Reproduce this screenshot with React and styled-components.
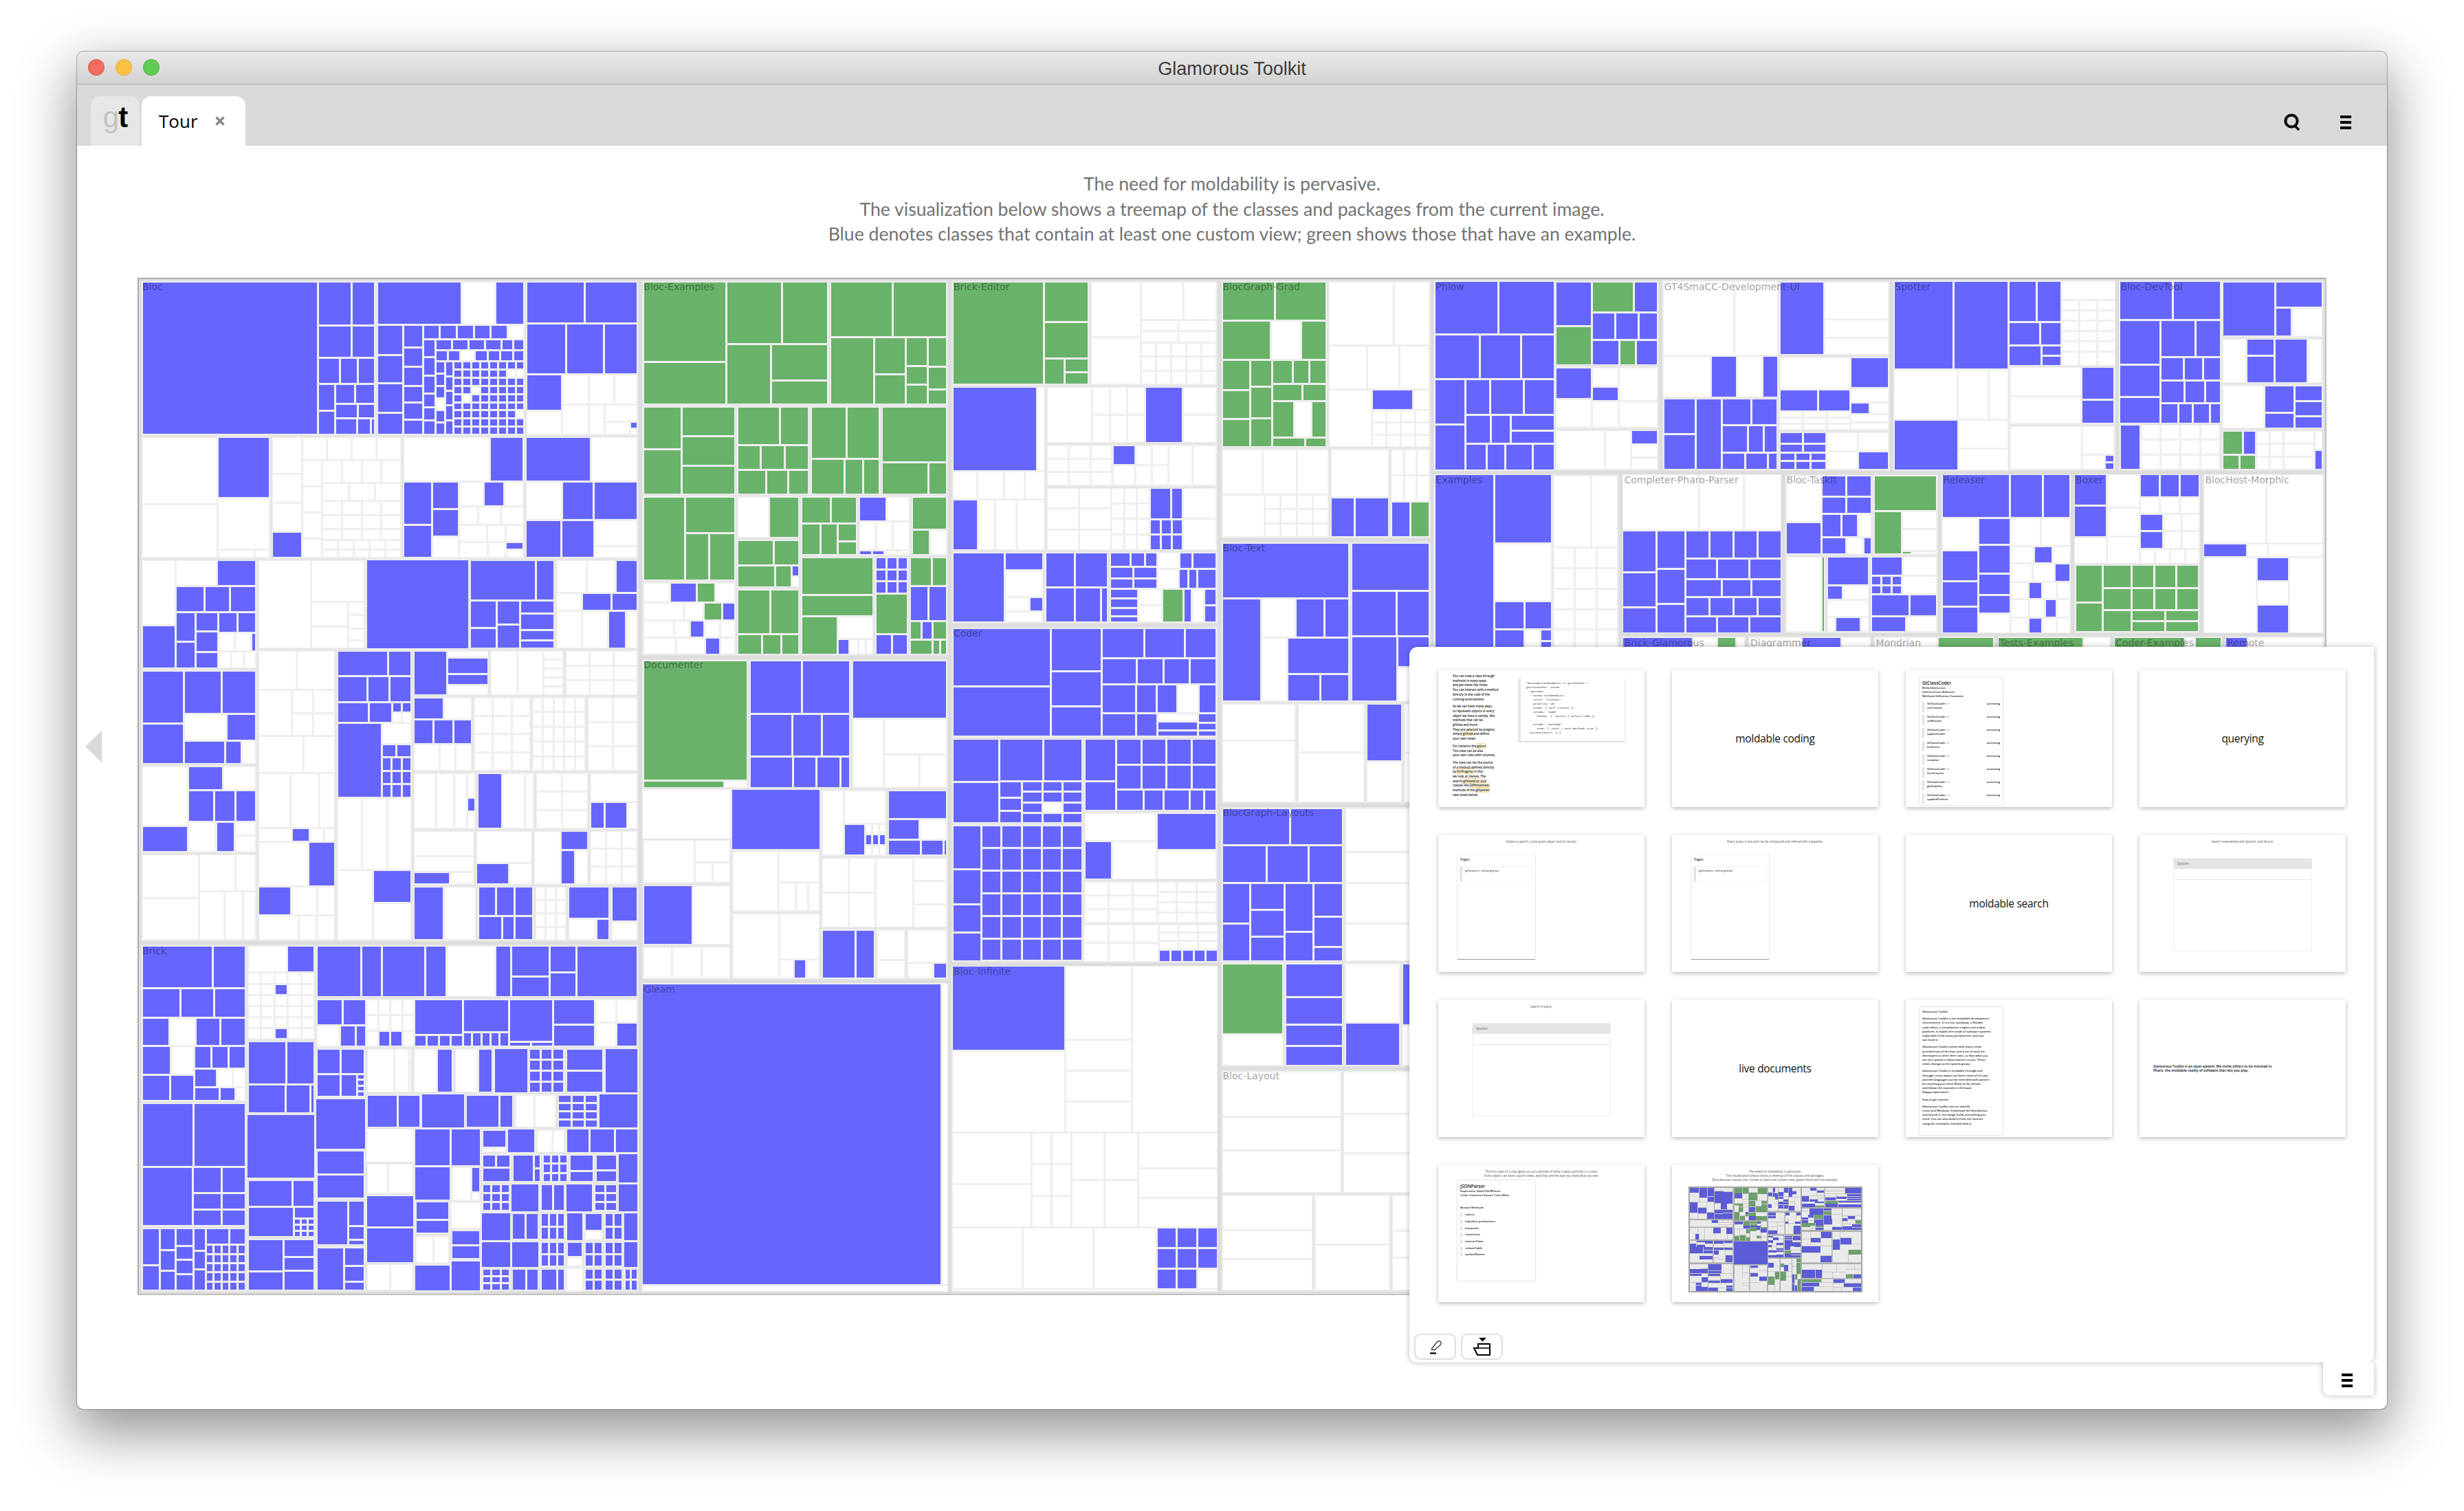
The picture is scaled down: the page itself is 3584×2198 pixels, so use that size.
import React from "react";
import styled, { createGlobalStyle } from "styled-components";

/* ---------- treemap data helpers ---------- */
// grid('bb/bw') gives equal rows of equal leaves, H/V split with weights
const grid = (s) => {
  const rows = s.split("/");
  if (rows.length === 1 && rows[0].length === 1) return { c: s };
  const mk = (r) => ({ d: "row", k: [...r].map((c) => ({ w: 1, n: { c } })) });
  if (rows.length === 1) return mk(rows[0]);
  return { d: "column", k: rows.map((r) => ({ w: 1, n: r.length === 1 ? { c: r } : mk(r) })) };
};
const kids = (items) =>
  items.flatMap((it) =>
    typeof it === "string"
      ? it.trim().split(/\s+/).map((t) => ({ w: +t.slice(1), n: { c: t[0] } }))
      : [{ w: it[0], n: typeof it[1] === "string" ? grid(it[1]) : it[1] }]
  );
const H = (...i) => ({ d: "row", k: kids(i) });
const V = (...i) => ({ d: "column", k: kids(i) });
const F = (node, label) => ({ ...node, f: true, label });
const W = (r, c) => grid(Array(r).fill("w".repeat(c)).join("/"));

const blocTree = F(
  V(
    [227, H(
      [705, F(H("b522", [172, V(
        [165, H("b95 b64")],
        [120, H("b95 b64")],
        [100, H("b60 b46 b45")],
        [190, H([50, V("b95 b85")], [112, V([68, H("b53 b53")], [50, H("b60 b46")], [58, H("b60 b34 b7")])])]
      )]))],
      [445, F(V(
        [165, H("b243 w92 b80")],
        [422, H(
          [75, V("b110 b100 b105 b78")],
          [58, V("b78 b65 b65 b55 b55 b50")],
          [295, V(
            [55, "bbbbbw"],
            [360, H(
              [37, V("b58 b60 b58 b43 b42 b45")],
              [258, V(
                [40, H("b38 b38 b38 b38 b24 b25")],
                [40, H("b26 b28 w32 b28 b28 b28 b24")],
                [265, H(
                  [25, V("b35 b35 b35 w35 b35 b35")],
                  [22, V("b45 b45 b45 b45 b45")],
                  [185, "bbbbbbbb/bbbbbbww/bbbbbbbb/bbwbbbbb/bwbbbbbb/bbbbbbbb/bbbbbbbw/bbbbbbbb/bbbbbbbb"]
                )]
              )]
            )]
          )]
        )]
      ))],
      [335, F(V(
        [160, H("b165 b150")],
        [195, H("b110 b105 b93")],
        [230, H(
          [102, V("b130 w85")],
          [218, V(
            [112, H("w75 w70 w65")],
            [115, H("w75", [42, "w"], [98, V("w60", [50, H("w65", [20, V("b25 w22")])])])]
          )]
        )]
      ))]
    )],
    [180, H(
      [385, F(H(
        [225, V("w250 w200")],
        [155, V("b222 w185", [32, H("w105 w40")])]
      ))],
      [388, F(H(
        [88, V("w130 w100 w100 b92")],
        [290, V(
          [90, "wwww"],
          [375, H(
            [60, V("w85 w85 w85 w62")],
            [232, V([75, "wwww"], [60, "www"], [48, "wwww"], [44, "wwww"], [38, "wwww"], [32, "wwwww"], [28, "wwwww"])]
          )]
        )]
      ))],
      [362, F(V(
        [165, H("w255 b97")],
        [285, H(
          [85, V("b150 b115")],
          [78, V("b92 b92 w72")],
          [190, V(
            [85, H("w72 b58 w55")],
            [65, H("w50 w62 w62")],
            [60, H("w55 w35 w35")],
            [55, H("w58 w35", [40, V("b22 w28")])]
          )]
        )]
      ))],
      [335, F(V(
        [162, H("b192 w135")],
        [140, H("w105 b92 b128")],
        [140, H("b100 b92", [130, V("w118 w50")])]
      ))]
    )],
    [558, H(
      [350, V(
        [156, F(H(
          [100, V("w240 b155")],
          [240, V(
            [92, H("w120 b115")],
            [95, H("b80 b70 b72")],
            [200, H(
              [60, V("b105 b95")],
              [68, V("b65 b75 b55")],
              [112, V([48, H("b52 b52")], [44, H("w48 w48 b10")], [40, "www"])]
            )]
          )]
        ))],
        [135, F(H(
          [128, V("b130 b98")],
          [218, V(
            [108, H("b105 b97")],
            [65, H("w122 b85")],
            [58, H("b118 b45 w38")]
          )]
        ))],
        [124, F(H(
          [140, V("w150 b62")],
          [205, V(
            [60, H("b100 w95")],
            [78, H("b72 b58 b58")],
            [75, H("w78 b52", [65, V("w32 w40")])]
          )]
        ))],
        [124, F(H(
          [172, V("w110 w105")],
          [172, V([92, H("w108 w60")], [122, H("w78 w55 w38")])]
        ))]
      )],
      [1142, V(
        [132, H(
          [322, F(H(
            [150, "w"],
            [160, V("w155", [180, H([108, V("w95 w85")], [50, V("w45 w50 w40 w25")])])]
          ))],
          [305, F(grid("b"))],
          [255, F(V(
            [155, H("b190 b48")],
            [185, H([78, V("b100 b72")], [68, V("b85 b85")], [100, V("b55 b70 b40 b30")])]
          ))],
          [245, F(V(
            [125, H("w85 w80 b60")],
            [70, H("w70 b82 b72")],
            [145, H("w72 w75 b50 w30")]
          ))]
        )],
        [426, H(
          [230, F(V(
            [90, H("w105 w105")],
            [105, H([70, "w"], [95, W(2, 2)])],
            [240, V([95, H("w125 w85")], [140, H("w90 w80 w40")], [35, H("w90 b45 w35 w25")])],
            [225, V(
              [100, H("w140 b72")],
              [65, H("b90 w72 w45")],
              [55, H("w95 w40 w40")]
            )]
          ))],
          [225, F(V(
            [165, V([55, H("b145 b62")], [55, H("b85 b60 b60")], [45, H("b85 b60", [55, "bb/ww"])])],
            [170, H("b125", [88, V("w40", [28, "bb"], [28, "bbb"], [28, "bbb"], [28, "bbb"])])],
            [165, H("w72 w72 w68")],
            [160, H("w100", [115, V("b75 w85")])]
          ))],
          [680, V(
            [105, H(
              [228, F(H("b95", [125, V("w15 b45 b30 w25")]))],
              [225, F(H("w50 w48", [40, W(5, 1)]))],
              [220, F(W(3, 3))]
            )],
            [170, H(
              [175, F(V([50, H("b85 w78")], [55, H("b52 b52 b48")], [60, H("w58 w35 w35")]))],
              [170, F(W(4, 3))],
              [160, F(W(5, 5))],
              [150, F(W(3, 2))]
            )],
            [130, H(
              [190, F(H("w75 w58 w40", [30, V("w60 b30 w40")]))],
              [172, F(H("b78 w72 w25"))],
              [160, F(W(3, 2))],
              [145, F(V("w60", [60, H("b38 b65 w25")]))]
            )],
            [125, H(
              [185, F(V("w75 w45", [40, H("b100 w65")]))],
              [170, F(V("w70", [50, H("b95 w65")]))],
              [165, F(H("w72", [80, V([30, "b"], [60, H("b42 w35")])]))],
              [145, F(W(3, 3))]
            )],
            [125, H(
              [190, F(H("b85 w90"))],
              [170, F(V([60, "bbb"], [50, H("b65 b30 b50")]))],
              [95, F(W(4, 3))],
              [125, F(V("b70", [50, H("w80 b35")]))],
              [80, F(V("b80 w40"))]
            )]
          )]
        )]
      )]
    )]
  ),
  "Bloc"
);

// lower right of the Brick block, a field of small tiles
const brickField = V(
  [60, H(
    [92, F(V([60, "b"], [18, "ww"]))],
    [100, F(grid("b"))],
    [110, F(H("w60 w45"))],
    [82, F(grid("b"))],
    [92, F(grid("b"))],
    [82, F(grid("b"))]
  )],
  [72, H(
    [88, F(V([30, H("b35 b38")], [28, "b"]))],
    [88, F(H("b60", [22, "b/b"]))],
    [78, F(grid("bbb/bbb/bbb"))],
    [75, F(V("b30 b18"))],
    [65, F(V("b30 b20"))],
    [58, F(grid("b"))]
  )],
  [70, H(
    [85, F(grid("bbb/bbb/bbb"))],
    [82, F(grid("b"))],
    [75, F(H("b35 b32"))],
    [78, F(grid("b"))],
    [70, F(grid("bb/bb/bb"))],
    [58, F(grid("b"))]
  )],
  [70, H(
    [85, F(grid("b"))],
    [82, F(H("b35 b32"))],
    [75, F(grid("bbb/bbb"))],
    [48, F(grid("b"))],
    [55, F(V("b28 w12"))],
    [55, F(grid("bb/bb"))],
    [40, F(grid("b"))]
  )],
  [65, H(
    [85, F(grid("b"))],
    [82, F(grid("b"))],
    [75, F(grid("bbb/bbb"))],
    [48, F(V("b25 w15"))],
    [55, F(grid("bb/bb"))],
    [55, F(grid("bb/bb"))],
    [40, F(grid("b"))]
  )],
  [58, H(
    [85, F(grid("bbb/bbb/bbb"))],
    [82, F(H("b40 b35"))],
    [75, F(H("b50 b20"))],
    [48, F(grid("w"))],
    [55, F(grid("bb/bb"))],
    [55, F(grid("bb/bb"))],
    [40, F(grid("bb/bb"))]
  )]
);

const brickTree = F(
  H(
    [315, V(
      [385, F(V(
        [105, H("b205 b90")],
        [72, H("b108 b93 b87")],
        [70, H("b76 w70 b68 b68")],
        [135, H(
          [155, V([68, H("b76 w60")], [62, H("b76 b62")])],
          [152, V([50, H("b45 b45 b45")], [40, H("b68 w45 w35")], [30, H("b72 b42 w25")])]
        )]
      ))],
      [305, F(V(
        [155, H("b150 b150")],
        [145, H("b143", [155, V([62, H("b80 b65")], [38, H("b80 b65")], [38, H("b80 b65")])])]
      ))],
      [155, F(H(
        [60, V("b90 b60")],
        [50, V("b50 b45 b45")],
        [58, V("b38 b30 b30 b35")],
        [40, V("b45 b38 b42")],
        [130, V([38, H("b60 b40")], [105, "bbbbb/bbbbb/bbbbb/bbbbb/bbbbb"])]
      ))]
    )],
    [205, V(
      [232, F(V(
        [65, H("w115 b80")],
        [160, "wwwww/wwbww/wwwww/wwwww/wwwww/wwbww"]
      ))],
      [178, F(V([102, H("b112 b78")], [68, H("b110 b70 b7")]))],
      [155, F(grid("b"))],
      [142, F(V(
        [62, H("b130 b60")],
        [70, H("b130", [60, V("b25", [45, "bbb/bbb/bbb"])])]
      ))],
      [128, F(H(
        [105, V("b80 b45")],
        [90, V("b40 b30 b45")]
      ))]
    )],
    [960, V(
      [128, F(H(
        [190, H("b125 b55")],
        [188, H("b120 b58")],
        [186, H("w142 b40")],
        [190, H([100, V("b70 b45")], [68, V("b60 b55")])],
        [172, "b"]
      ))],
      [120, F(H(
        [145, V([62, H("b70 b62")], [50, H("w65 b42 b25")])],
        [142, "wwww/wwww/wbbw"],
        [142, V([78, "b"], [28, "bbbb"])],
        [135, V([70, "b"], [32, "bbbbb"])],
        [130, V([92, "b"], [12, "bb"])],
        [122, V("b55 b48")],
        [125, "ww/wb"]
      ))],
      [610, H(
        [150, V(
          [122, F(V([62, H("b65 b65")], [56, H("b65 b45", [22, "b/b/b/b"])]))],
          [125, F(grid("b"))],
          [122, F(V("b55 b55"))],
          [112, F(H("b88", [50, V("b60 b30 b8")]))],
          [110, F(H("b72", [60, V("b50 b40 b20")]))]
        )],
        [815, V(
          [112, H(
            [140, F(H("w85 w40", [10, W(3, 1)]))],
            [122, F(H("w70 b45"))],
            [118, F(H("w65 b40"))],
            [100, F(grid("b"))],
            [110, F(grid("bbb/bbb/bbb/bbb"))],
            [115, F(V("b50 b50"))],
            [100, F(grid("b"))]
          )],
          [86, H(
            [142, F(H("b75 b55"))],
            [110, F(grid("b"))],
            [125, F(H("b105 b40"))],
            [108, F(H("w50 w55"))],
            [105, F(grid("bbb/bbb/bbb/bbb"))],
            [100, F(grid("b"))]
          )],
          [400, H(
            [145, V(
              [105, F(grid("w"))],
              [100, F(H("w60 w70"))],
              [100, F(grid("b"))],
              [110, F(grid("b"))],
              [88, F(H("w70 w70"))]
            )],
            [108, V(
              [110, F(grid("b"))],
              [100, F(grid("b"))],
              [100, F(V("b40 b30"))],
              [85, F(H("w50 w45"))],
              [78, F(grid("b"))]
            )],
            [92, V(
              [85, F(grid("b"))],
              [80, F(H("w55", [28, V("b70 w20")]))],
              [60, F(grid("w"))],
              [70, F(V("b35 b30"))],
              [70, F(grid("b"))]
            )],
            [470, brickField]
          )]
        )]
      )]
    )]
  ),
  "Brick"
);

const blocExamples = F(
  V(
    [285, H(
      [488, F(H(
        [218, V("g178 g92")],
        [268, V([138, H("g142 g118")], [132, H("g112", [150, V("g78 g50")])])]
      ))],
      [308, F(V(
        [125, H("g160 g140")],
        [150, H("g108", [82, V("g72 g58")], [58, V("g60 g38 g40")], [50, V("g60 g45 g28")])]
      ))]
    )],
    [205, H(
      [242, F(H([100, V("g95 g100")], [140, V("g65 g65 g62")]))],
      [188, F(V([82, H("g107 g70")], [52, "ggg"], [52, H("g75 g55 g50")]))],
      [182, F(V([115, H("g90 g82")], [78, H("g108 g55 g50")]))],
      [172, F(V([122, "g"], [72, H("g118 g45")]))]
    )],
    [365, H(
      [245, V(
        [192, F(H("g105", [130, V("g80", [110, H("g58 g65")])]))],
        [165, F(V([45, H("w68 b70 g45 w50")], [40, H("w95 w45 g40 b28")], [38, H("w65 w30 b28 w30 w30")], [38, H("w70 w60 b28 w30")]))]
      )],
      [165, V(
        [95, F(H("w80 g75"))],
        [108, F(V([60, H("g92 g62")], [50, H("g92 g38", [18, "b/w"])]))],
        [150, F(V([105, H("g82 g70")], [48, H("g60 g46 g42")]))]
      )],
      [385, V(
        [135, H(
          [150, F(V([60, H("g72 g62")], [72, H("g45 g38", [50, V("g35 g25")])]))],
          [135, F(V([60, H("b65 w55")], [70, "www"], [12, "bbww"]))],
          [95, F(V([62, "g"], [50, "gw"]))]
        )],
        [220, H(
          [195, F(V(
            [75, "g"],
            [40, "g"],
            [80, H("g78", [80, V([40, "w"], [30, H("b22 w15 w12 w12")])])]
          ))],
          [88, F(V([70, grid("bbb/bbb/bbb")], [75, "g"], [40, "bb"]))],
          [100, F(V([62, H("g50 g33")], [75, H("b45 b45")], [40, H("g25 b24 g35")], [32, H("g45 g12 g12")]))]
        )]
      )]
    )]
  ),
  "Bloc-Examples"
);

const documenter = F(
  V(
    [292, H(
      [275, F(V("g270", [16, H("g208 w55")]))],
      [265, F(V(
        [120, H("b133 b122")],
        [95, H("b108 b72 b70")],
        [70, H("b108 b55", [88, H("b62 b22")])]
      ))],
      [250, F(V("b130", [160, H("w80", [170, V("w62", [62, H("w92 w70")])])]))]
    )],
    [429, H(
      [235, V(
        [108, F(grid("w"))],
        [98, F(H("w130", [95, "w/ww"]))],
        [135, F(H("b125 w95"))],
        [72, F(W(1, 3))]
      )],
      [235, V(
        [131, F(grid("b"))],
        [135, F(H("w118", [110, V("w60", [60, H("w45 w32 w30")])]))],
        [145, F(H("w120", [108, V("w95", [42, H("w30 b26 w30")])]))]
      )],
      [335, V(
        [148, H(
          [168, F(H("w52", [112, V("w70", [70, H("b50", [55, grid("www/bbb/www")])])]))],
          [155, F(V("b60", [45, H("b82 w72")], [35, H("b82 b55 b5")]))]
        )],
        [152, F(H([140, W(2, 2)], [92, "w"], [88, V("w50 w50 w50")]))],
        [112, H(
          [145, F(H("b85 b45"))],
          [78, F(V("w70 w40"))],
          [110, F(V([60, "w"], [30, H("w70 b35")]))]
        )]
      )]
    )]
  ),
  "Documenter"
);

const gleam = F(V([420, H("b433 w7")], [6, "w"]), "Gleam");

const brickEditor = F(
  V(
    [240, H(
      [360, F(H("g235", [118, V("g88 g80", [60, H("g50", [65, V("g30 g28")])])]))],
      [333, F(H([130, V("w125 w105")], [195, V([82, H("w105 w80")], [48, W(2, 2)], [90, W(3, 5)])]))]
    )],
    [376, H(
      [245, F(V(
        [190, H("b215 w15")],
        [178, V([60, H("w60 w65 w50 w48")], [108, H("b62 w40 w50 w70")])]
      ))],
      [458, V(
        [148, F(H("w115", [140, "www/www"], [95, "b"], [90, "w/w"]))],
        [108, F(H([170, W(3, 3)], [60, "b/w"], [85, W(2, 2)], [125, "ww"]))],
        [165, F(H([168, W(3, 2)], [100, W(4, 3)], [85, V([58, H("b50 b25")], [28, "bbb"], [28, "bbb"])], [88, "w/w"]))]
      )]
    )],
    [165, H(
      [245, F(H("b130", [100, V("b40 w60", [36, H("w65 b32")], [22, "w"])]))],
      [170, F(V([50, H("b72 b78")], [50, H("b72 b62 b12")]))],
      [290, F(V(
        [75, H(
          [125, V([38, H("b45 b28 b25")], [30, "bb"], [25, "bb"])],
          [155, V([30, H("w55 b30 b60")], [35, H("w55 b22 b20 b50")])]
        )],
        [70, H([70, V("b25 b25 b20 b15")], [60, "w/w"], [105, H("g45 b15 w25")], [30, "b/b"])]
      ))]
    )]
  ),
  "Brick-Editor"
);

const coder = F(
  V(
    [290, F(H(
      [260, V("b150 b130")],
      [135, V("b110 b90 b75")],
      [305, V(
        [80, H("b110 b105 b80")],
        [68, H("b88 b65 b65 b65")],
        [75, H("b88 b50 b50 w52 b42")],
        [62, H("b88 b52", [112, V("w30 b32 b20")], [50, V("b25 b18 b12")])]
      )]
    ))],
    [600, H(
      [345, V(
        [230, F(H(
          [122, V("b115 b110")],
          [220, V(
            [118, H("b110 b96")],
            [115, H([60, V("b42 b30 b30")], [155, grid("bbb/bbb/bwb/bbb")])]
          )]
        ))],
        [370, F(H([75, V("b95 b75 b60 b60")], [265, "bbbbb/bbbbb/bbbbb/bbbbb/bbbbb/bbbbb"]))]
      )],
      [352, V(
        [190, F(H(
          [85, V("b105 b70")],
          [265, V([62, "bbbb"], [58, "bbbb"], [50, H("b72 b52 b68 b35 b30")])]
        ))],
        [175, F(H([195, V("w72", [105, H("b60 w100")])], [160, V("b95 w75")]))],
        [110, F(H([190, W(3, 3)], [155, W(4, 3)]))],
        [100, H([200, W(2, 3)], [155, V([60, W(3, 3)], [30, "bbbbb"])])]
      )]
    )]
  ),
  "Coder"
);

const blocInfinite = F(
  V(
    [245, H([170, V("b125 w120")], [100, V("w100 w40 w40 w40")], [125, "w"])],
    [140, H([120, V("w60 w50")], [60, W(3, 2)], [100, W(2, 2)], [120, V("w55 w45 w45")])],
    [90, H("w90 w90 w80", [80, grid("bbb/bbb/bbw")])],
    [1, "w"]
  ),
  "Bloc-Infinite"
);

const blocGraphGrad = F(
  V(
    [250, H(
      [445, F(V(
        [58, H("g220 g212")],
        [58, H("g200 w120 g100")],
        [130, H(
          [115, V("g45 g42 g40")],
          [90, V("g38 g45 g40")],
          [225, V(
            [40, H("g115 g92 g92")],
            [27, H("g120 g92")],
            [60, H("g92 w68 g58")],
            [15, H("g72 g45")]
          )]
        )]
      ))],
      [430, F(V(
        [95, H("w275 w145")],
        [65, H("w160 w130 w125")],
        [85, H("w175", [245, V([30, H("b170 w65")], [55, W(3, 4)])])]
      ))]
    )],
    [135, H(
      [470, F(V([70, H("w175 w145 w135")], [65, H("w175", [280, W(3, 4)])]))],
      [255, F(V([72, "w"], [62, H("b90 b135")]))],
      [170, F(V([80, W(2, 3)], [55, H("b70 g70")]))]
    )]
  ),
  "BlocGraph-Grad"
);

const blocText = F(
  V(
    [240, H(
      [555, F(V(
        [82, "b"],
        [160, H("b160", [380, V([58, H("w135 b112 b98")], [95, H("w100", [260, V("b55", [45, H("b90 b80")])])])])]
      ))],
      [340, F(V([70, "b"], [68, H("b185 b135")], [100, H("b185", [135, V("b45 w50")])]))]
    )],
    [150, H(
      [315, F(V("w55 w95"))],
      [285, F(V("w72 w75"))],
      [150, F(V([85, "b"], [60, "w"]))],
      [110, F(grid("w/w"))]
    )]
  ),
  "Bloc-Text"
);

const blocGraphLayouts = F(
  V(
    [230, H(
      [475, F(V(
        [55, H("b255 b200")],
        [55, H("b165 b155 b125")],
        [115, H([105, V("b60 b55")], [130, V("b35 b35 b32")], [110, V("b55 b32")], [112, V("b32 b28 b12")])]
      ))],
      [330, F(V("w65 w45 w60 w55"))]
    )],
    [155, H(
      [245, F(V("g105 w45"))],
      [230, F(V("b50 b40 b30 b28"))],
      [220, F(V("w70 b50"))],
      [110, F(V("b95 w60"))]
    )]
  ),
  "BlocGraph-Layouts"
);

const blocLayout = F(
  V(
    [190, H([475, F(V("w70 w50 w65"))], [345, F(V("w65 w60 w60"))])],
    [150, H([360, F(V("w55 w45 w50"))], [300, F(V("w75 w70"))], [150, F(V("w55 w40 w50"))])]
  ),
  "Bloc-Layout"
);

const phlow = F(
  H(
    [205, V(
      [213, H("b105 b92")],
      [175, H("b73 b66 b52")],
      [362, H(
        [52, V("b170 b170")],
        [148, V(
          [135, H("b40 b55 b50")],
          [110, H("b40 b30", [75, V("b58 b45")])],
          [100, H("b30 b25 b40 b30")]
        )]
      )]
    )],
    [178, V(
      [330, F(H(
        [60, V("b165 g145")],
        [110, V([110, H("g68 b38")], [100, H("b38 b38 b30")], [90, H("b38 g22 b30")])]
      ))],
      [240, F(H([60, V("b125 w115")], [45, V("w70 b50 w100")], [65, V("w120 w95")]))],
      [155, F(H("w80 w40", [45, V([45, "b"], [90, "w/w"])]))]
    )]
  ),
  "Phlow"
);

const gt4 = F(
  H(
    [198, V(
      [295, H("w118 w72")],
      [165, H("w80 b42 w40 b25")],
      [280, F(H([55, V("b130 b130")], [42, "b"], [95, V([95, H("b48 b42")], [95, H("b45 b25 b22")], [60, H("b42 b42 b15")])]))]
    )],
    [190, V(
      [295, F(H("b72", [110, V("w145 w70 w60")]))],
      [295, F(H([120, V("w120", [85, H("b45 b38")], [75, W(3, 3)])], [65, V("b135 w60", [55, "bw"], [75, "w/w"])]))],
      [150, F(H([75, V([40, "bb"], [30, "bb"], [30, "bbb"], [30, "bbb"])], [50, "w/w"], [50, "w/b"]))]
    )]
  ),
  "GT4SmaCC-Development-UI"
);

const spotter = F(
  H(
    [192, V(
      [350, H("b97 b88")],
      [200, H("w105 w50 w30")],
      [200, H("b102", [82, V("w105 w78")])]
    )],
    [178, V(
      [345, H(
        [85, V([160, H("b42 b37")], [90, H("b47 b30")], [80, H("b47", [30, V("b38 b38")])])],
        [88, V([60, "w"], [175, W(5, 3)], [50, "www"])]
      )],
      [230, F(H([120, V("w105 w100")], [55, V("b125 b90")]))],
      [175, F(H([120, "w"], [55, V("w95", [55, H("w25", [12, "b/b"])])]))]
    )]
  ),
  "Spotter"
);

const devTool = F(
  H(
    [170, V(
      [155, H("b88 b78")],
      [405, H([68, V("b170 b120 b100")], [100, V([115, H("b55 b40")], [75, H("b38 b30 b28")], [70, H("b32 b28 b20")], [65, H("b32 b25 b30 b18")])])],
      [175, F(H("b32", [135, W(3, 4)]))]
    )],
    [170, V(
      [218, F(H("b85", [78, V("b95", [115, H("b22 w45")])]))],
      [175, F(H("w35", [45, V("b55 b95")], [50, "b"], [20, "w"]))],
      [170, F(H("w65", [50, V("b90 b48")], [45, V("b50 b45 b35")]))],
      [155, F(H([62, V([90, H("g35 b22")], [55, "gg"])], [50, W(3, 2)], [55, W(3, 1)], [15, "w/b"]))]
    )]
  ),
  "Bloc-DevTool"
);

const examples = F(
  V(
    [480, H(
      [200, H("b98", [98, V("b170 w140", [70, H("b50 b45")], [55, H("b48 w24", [20, V("b30 b25")])])])],
      [110, F(V([170, H("w65 w45")], [240, W(5, 3)]))]
    )],
    [230, H("b58 w35 w30 w60", [60, V([85, H("b24 b24")], [60, H("b14 b12 b25")], [40, "bb"], [50, H("g48 g20")])])],
    [1500, "w"]
  ),
  "Examples"
);

const completer = F(
  V(
    [235, H("w130 w75 w62")],
    [430, H(
      [58, V("b165 b135 b100")],
      [50, V("b120 b110 b90")],
      [165, V(
        [110, "bbbb"],
        [80, "bbb"],
        [70, H("b35 b28 b28")],
        [75, "bbbb"],
        [65, "bbb"]
      )]
    )]
  ),
  "Completer-Pharo-Parser"
);

const taskit = F(
  V(
    [325, H(
      [148, F(H(
        [58, V("w190 b130")],
        [82, V([80, "bb"], [65, "bb"], [85, H("b32 b25 w20")], [65, H("b32 w22 b8")])]
      ))],
      [110, F(V(
        [135, "g"],
        [172, H("g45", [60, V("w65 w85", [14, H("g12 w40")])])]
      ))]
    )],
    [310, H(
      [68, F(H("w60 g3"))],
      [72, F(V([105, "b"], [60, H("b22 w40")], [60, "w"], [60, H("w10 b40 w10")]))],
      [115, F(V(
        [60, H("b48 w52")],
        [60, H([48, "bbb/bbb"], [52, "w"])],
        [70, H("b35 b25")],
        [50, H("b52 w45")]
      ))]
    )]
  ),
  "Bloc-TaskIt"
);

const releaser = F(
  V(
    [175, H("b110 b52 b42")],
    [460, H(
      [58, V("w120 b115 b96 b97")],
      [52, V("b100 b106 b77 b65 w72")],
      [95, V(
        [100, "ww"],
        [60, H("w40 b32 w30")],
        [65, H("w35 w35 b25")],
        [60, H("w28 b22 w22 w22")],
        [65, H("w30 w25 b18 w22")],
        [55, H("w28 b22 w22 w22")]
      )]
    )]
  ),
  "Releaser"
);

const boxer = F(
  V(
    [360, H(
      [55, V("b118 b118 w100")],
      [55, V("w100 w85 w80")],
      [100, V([85, "bbb"], [60, "www"], [65, H("b28 w22 w22")], [65, H("b28 w22 w22")], [55, "wwww"])]
    )],
    [270, F(H(
      [45, V("g130 g100")],
      [48, V("g85 g80 g80")],
      [110, V([85, "ggg"], [80, "ggg"], [40, "gg"], [40, "gg"])]
    ))]
  ),
  "Boxer"
);

const morphic = F(
  V(
    [300, H("w100 w90")],
    [60, H("b70 w30 w90")],
    [330, H("w80", [50, V("b90 w90 b110")], [50, "w"])]
  ),
  "BlocHost-Morphic"
);

const strip = (label, cells) => F(V([48, H(...cells)], [900, "w"]), label);

const stage2 = V(
  [282, H(
    [331, phlow],
    [335, gt4],
    [327, spotter],
    [301, devTool]
  )],
  [1196, H(
    [269, examples],
    [1025, V(
      [237, H(
        [237, completer],
        [229, taskit],
        [192, releaser],
        [188, boxer],
        [179, morphic]
      )],
      [959, H(
        [184, strip("Brick-Glamorous", ["b110 w35 g28 w11"])],
        [183, strip("Diagrammer", ["w80 b60 w43"])],
        [180, strip("Mondrian", ["w95 g85"])],
        [169, strip("Tests-Examples", ["g130 w39"])],
        [162, strip("Coder-Examples", ["g110 w12 g40"])],
        [147, strip("Remote", ["b32 w115"])]
      )]
    )]
  )]
);

const treemap = H(
  [730, V([969, blocTree], [509, brickTree])],
  [451, V([552, blocExamples], [472, documenter], [454, gleam])],
  [392, V([505, brickEditor], [493, coder], [480, blocInfinite])],
  [1610, H(
    [309, V([381, blocGraphGrad], [386, blocText], [384, blocGraphLayouts], [327, blocLayout])],
    [1294, stage2]
  )]
);

/* seeded little treemap for the last tour card */
const seeded = (seed) => {
  let s = seed;
  return () => {
    s = (s * 16807) % 2147483647;
    return s / 2147483647;
  };
};
const rnd = seeded(4242);
const fill = (depth, pB, pG, dir = "row") => {
  if (depth === 0) {
    const r = rnd();
    return { c: r < pB ? "b" : r < pB + pG ? "g" : "w" };
  }
  const n = 2 + Math.floor(rnd() * 2);
  const next = dir === "row" ? "column" : "row";
  return { d: dir, k: Array.from({ length: n }, () => ({ w: 1 + rnd(), n: fill(depth - 1, pB, pG, next) })), f: depth > 2 };
};
const miniTree = H(
  [66, V([48, fill(4, 0.62, 0)], [30, fill(4, 0.22, 0, "column")], [34, fill(4, 0.45, 0)], [42, fill(4, 0.55, 0)])],
  [50, V([50, fill(4, 0.1, 0.55)], [30, fill(4, 0.3, 0.3)], [34, F(grid("b"))], [40, fill(4, 0.2, 0.1)])],
  [50, V([36, fill(4, 0.55, 0)], [34, fill(4, 0.35, 0)], [34, fill(4, 0.45, 0.05)], [50, fill(4, 0.12, 0.25)])],
  [90, V([30, fill(4, 0.45, 0.05)], [34, fill(4, 0.35, 0.12)], [48, fill(4, 0.38, 0.15)], [42, fill(4, 0.28, 0.2, "column")])]
);

/* ---------- styles ---------- */
const Global = createGlobalStyle`
  html, body { margin: 0; padding: 0; background: #fff; }
  body { width: 3584px; height: 2198px; overflow: hidden; font-family: "Open Sans", sans-serif; }
`;

const Page = styled.div`
  padding: 75px 112px 0;
`;

const Win = styled.div`
  width: 3360px;
  height: 1975px;
  display: flex;
  flex-direction: column;
  border-radius: 10px;
  background: #fff;
  box-shadow: 0 0 0 1px rgba(0, 0, 0, 0.28), 0 30px 80px 6px rgba(0, 0, 0, 0.42);
`;

const TitleBar = styled.div`
  height: 44px;
  flex: none;
  position: relative;
  display: flex;
  align-items: center;
  justify-content: center;
  padding-top: 3px;
  box-sizing: content-box;
  border-radius: 10px 10px 0 0;
  background: linear-gradient(#e9e9e9, #d2d2d2);
  border-bottom: 1px solid #b0b0b0;
  font: 27px "Liberation Sans", sans-serif;
  color: #3c3c3c;
`;

const Lights = styled.div`
  position: absolute;
  left: 16px;
  top: 11px;
  display: flex;
  gap: 16px;
`;

const Light = styled.span`
  width: 24px;
  height: 24px;
  border-radius: 50%;
  background: ${(p) => p.$c};
  box-shadow: inset 0 0 0 1px rgba(0, 0, 0, 0.1);
`;

const TabBar = styled.div`
  height: 89px;
  flex: none;
  box-sizing: border-box;
  background: #d9d9d9;
  display: flex;
  align-items: flex-end;
  padding: 0 52px 0 20px;
  gap: 3px;
`;

const LogoTab = styled.div`
  width: 71px;
  height: 72px;
  border-radius: 14px 14px 0 0;
  background: #e7e7e7;
  display: flex;
  align-items: center;
  justify-content: center;
  font: 42px "Liberation Sans", sans-serif;
  padding-bottom: 10px;
  box-sizing: border-box;
  letter-spacing: -1px;
`;

const LogoG = styled.span`
  color: #c2c2c2;
`;

const LogoT = styled.span`
  color: #000;
  font-weight: 700;
`;

const Tab = styled.div`
  width: 151px;
  height: 72px;
  box-sizing: border-box;
  border-radius: 14px 14px 0 0;
  background: #fff;
  display: flex;
  align-items: center;
  padding: 0 0 0 25px;
  gap: 24px;
  font: 26px "Open Sans", sans-serif;
  color: #000;
`;

const ToolIcons = styled.div`
  margin-left: auto;
  align-self: center;
  display: flex;
  align-items: center;
  gap: 58px;
  padding-top: 20px;
`;

const Content = styled.div`
  flex: 1;
  position: relative;
  padding: 37px 0 0 88px;
`;

const Intro = styled.div`
  width: 3184px;
  text-align: center;
  font: 26.6px/36.5px "Lato", sans-serif;
  color: #737373;
  margin-bottom: 45px;
`;

const MapFrame = styled.div`
  width: 3184px;
  height: 1480px;
  box-sizing: border-box;
  display: flex;
  background: #e4e4e4;
  border: 2px solid #ababab;
  border-right-color: #c2c2c2;
  border-bottom-color: #c2c2c2;
  --blue: #6666ff;
  --green: #69b269;
  --white: #fff;
  --line: #efefef;
  --frame: #e6e6e6;
  --outer: #dddddd;
  --cell: 1.5px;
  --pad: 1.5px;
  --pad-top: 2.5px;
`;

const MiniFrame = styled(MapFrame)`
  width: 253px;
  height: 154px;
  border: 1px solid #999;
  background: #bbb;
  --blue: #5c5cd6;
  --green: #6c9f6c;
  --white: #e9e9e9;
  --line: #c8c8c8;
  --frame: #adadad;
  --outer: #a4a4a4;
  --cell: 0.25px;
  --pad: 0.5px;
  --pad-top: 0.7px;
`;

const Split = styled.div`
  display: flex;
  flex-direction: ${(p) => p.$dir};
  min-width: 0;
  min-height: 0;
  flex-basis: 0;
  position: relative;
  box-sizing: border-box;
  ${(p) => (p.$framed ? "padding: var(--pad); background: var(--frame);" : "")}
  ${(p) => (p.$top ? "padding: var(--pad-top); background: var(--outer);" : "")}
`;

const Leaf = styled.div`
  flex-basis: 0;
  min-width: 0;
  min-height: 0;
  box-sizing: border-box;
  padding: var(--cell);
  background: linear-gradient(${(p) => p.$fill}, ${(p) => p.$fill}) content-box, var(--line);
`;

const MapLabel = styled.span`
  position: absolute;
  left: 5px;
  top: 2px;
  font: 14px/18px "DejaVu Sans", sans-serif;
  color: rgba(0, 0, 0, 0.4);
  white-space: nowrap;
`;

const Arrow = styled.div`
  position: absolute;
  left: 12px;
  top: 851px;
  width: 0;
  height: 0;
  border-top: 23px solid transparent;
  border-bottom: 23px solid transparent;
  border-right: 24px solid #d9d9d9;
`;

const Popover = styled.div`
  position: absolute;
  left: 1938px;
  top: 729px;
  width: 1403px;
  height: 1041px;
  box-sizing: border-box;
  border-radius: 12px 0 10px 10px;
  background: #fff;
  box-shadow: 0 0 9px rgba(0, 0, 0, 0.28);
  display: flex;
  flex-direction: column;
  justify-content: space-between;
  padding: 33px 0 4px;
`;

const CardGrid = styled.div`
  display: grid;
  grid-template-columns: repeat(4, 300px);
  grid-auto-rows: 200px;
  gap: 40px;
  padding-left: 42px;
`;

const Card = styled.div`
  background: #fff;
  overflow: hidden;
  box-shadow: 0 2px 6px rgba(0, 0, 0, 0.28);
  display: flex;
  flex-direction: column;
  box-sizing: border-box;
  font: 5.5px/6.7px "Open Sans", sans-serif;
  color: #111;
`;

const BigWord = styled(Card)`
  align-items: center;
  justify-content: center;
  font-size: 15.5px;
  line-height: 20px;
  letter-spacing: -0.3px;
  color: #111;
`;

const SplitCard = styled(Card)`
  flex-direction: row;
  gap: 16px;
  padding: 6px 0 0 21px;
`;

const TextCol = styled.div`
  width: 80px;
  flex: none;
  font-size: 4.4px;
  font-weight: 600;
`;

const Para = styled.p`
  margin: 0 0 4px;
  white-space: pre;
`;

const Mark = styled.span`
  box-shadow: 0 0 0 0.5px #f0b040;
  background: #fff8e0;
`;

const CodeBox = styled.div`
  width: 154px;
  height: 91px;
  margin-top: 7px;
  box-sizing: border-box;
  padding: 4px 4px 0 8px;
  border-left: 3px solid #e6e6e6;
  box-shadow: 0 1px 2px rgba(0, 0, 0, 0.25);
  white-space: pre;
  font: 4.2px/6px "Liberation Mono", monospace;
  color: #222;
`;

const Pane = styled.div`
  width: ${(p) => p.$w || 121}px;
  height: ${(p) => p.$h || 186}px;
  margin: ${(p) => p.$top || 11}px 0 0 ${(p) => p.$x || 20}px;
  box-sizing: border-box;
  padding: 4px 4px 0;
  overflow: hidden;
  box-shadow: 0 0 2px rgba(0, 0, 0, 0.3);
  font-size: 4.2px;
  font-weight: 600;
  line-height: 6.2px;
`;

const PaneTitle = styled.div`
  font-size: 6.5px;
  line-height: 9px;
  color: #111;
`;

const MethodRow = styled.div`
  border-left: 3px solid #e2e2e2;
  padding-left: 4px;
  margin-top: ${(p) => (p.$slim ? "3.7px" : "4px")};
  height: ${(p) => (p.$slim ? "6px" : "15px")};
  display: flex;
  justify-content: space-between;
  white-space: pre;
`;

const ListGap = styled.div`
  height: 12px;
`;

const CardTitle = styled.div`
  width: 100%;
  text-align: center;
  font-size: 4.4px;
  line-height: 6px;
  color: #555;
  padding-top: 7px;
`;

const TallPane = styled.div`
  margin: 15px 0 0 28px;
  width: 113px;
  height: 153px;
  box-sizing: border-box;
  box-shadow: 0 1px 1px rgba(0, 0, 0, 0.35), 0 0 1px rgba(0, 0, 0, 0.2);
  padding: 5px 4px 0;
  font-size: 5px;
`;

const InnerBox = styled.div`
  margin-top: 7px;
  padding: 3px 4px;
  height: 15px;
  border-left: 3px solid #e2e2e2;
  box-shadow: 0 0 1px rgba(0, 0, 0, 0.3);
  font-size: 4.2px;
`;

const TableBox = styled.div`
  margin: 22px 0 0 50px;
  width: 200px;
  height: 134px;
  display: flex;
  flex-direction: column;
  box-shadow: 0 0 1px rgba(0, 0, 0, 0.4);
`;

const TableHead = styled.div`
  height: 15px;
  flex: none;
  background: #e5e5e5;
  font-size: 5px;
  line-height: 15px;
  padding-left: 5px;
  color: #666;
`;

const TableGap = styled.div`
  height: 15px;
  flex: none;
  border-bottom: 1px solid #e8e8e8;
`;

const Note = styled(Card)`
  justify-content: center;
  padding: 0 20px;
  color: #000;
  font-size: 5px;
  font-weight: 600;
  line-height: 6px;
`;

const MiniWrap = styled.div`
  margin: 7px 0 0 24px;
`;

const FootBar = styled.div`
  display: flex;
  gap: 7px;
  padding-left: 7px;
`;

const IconBtn = styled.div`
  width: 61px;
  height: 38px;
  box-sizing: border-box;
  border: 2px solid #dedede;
  border-radius: 9px;
  display: flex;
  align-items: center;
  justify-content: center;
`;

const MenuTab = styled.div`
  position: absolute;
  right: 0;
  top: 100%;
  width: 74px;
  height: 48px;
  background: #fff;
  border-radius: 0 0 0 10px;
  box-shadow: 0 0 9px rgba(0, 0, 0, 0.28);
  clip-path: inset(0 -20px -20px -20px);
  display: flex;
  align-items: center;
  justify-content: center;
  padding: 3px 4px 0 0;
  box-sizing: border-box;
`;

/* ---------- drawing ---------- */
const SearchIcon = () => (
  <svg width="24" height="26" viewBox="0 0 24 26">
    <circle cx="11" cy="11" r="8.6" fill="none" stroke="#0a0a0a" strokeWidth="4" />
    <path d="M15 17 L22 24" stroke="#0a0a0a" strokeWidth="3.5" />
  </svg>
);

const BarsIcon = () => (
  <svg width="16" height="20" viewBox="0 0 16 20">
    <path d="M0 0h16v4H0zM0 8h16v4H0zM0 16h16v4H0z" fill="#000" />
  </svg>
);

const CloseIcon = () => (
  <svg width="16" height="16" viewBox="0 0 16 16">
    <path d="M2.5 2.5 L13.5 13.5 M13.5 2.5 L2.5 13.5" stroke="#8a8a8a" strokeWidth="3.6" />
  </svg>
);

const PenIcon = () => (
  <svg width="20" height="22" viewBox="0 0 20 22">
    <path d="M5 13 L13 3.5 Q15 2 17 3.5 L18 5 Q18.5 6.5 17.5 8 L9 15.5 L4.5 15.5 Z" fill="none" stroke="#444" strokeWidth="1.5" />
    <path d="M2 20.5 H11" stroke="#000" strokeWidth="2.2" />
  </svg>
);

const InspectIcon = () => (
  <svg width="26" height="28" viewBox="0 0 26 28">
    <path d="M8 1 H19 L13.5 6.5 Z" fill="#000" />
    <path d="M7 10 H24 V26 H6 L1 16 H7 Z" fill="none" stroke="#000" strokeWidth="2" />
    <path d="M7 16 H24" stroke="#000" strokeWidth="1.6" />
  </svg>
);

const Node = ({ n, w }) => {
  const flex = { flexGrow: w };
  if (n.c) {
    const fill = n.c === "b" ? "var(--blue)" : n.c === "g" ? "var(--green)" : "var(--white)";
    return <Leaf $fill={fill} style={flex} />;
  }
  return (
    <Split $dir={n.d} $framed={n.f} $top={!!n.label} style={flex}>
      {n.k.map((k, i) => (
        <Node key={i} n={k.n} w={k.w} />
      ))}
      {n.label && <MapLabel>{n.label}</MapLabel>}
    </Split>
  );
};

const methods = ["onCreated", "onResized", "updateCoder", "fireEvent", "initialize", "forceLayout", "gtViewsFor", "updatePosition"];
const parserRows = ["tokens", "stipulate_productions", "keywords", "transitions", "scannerClass", "reduceTable", "symbolNames"];

const intro = [
  "The need for moldability is pervasive.",
  "The visualization below shows a treemap of the classes and packages from the current image.",
  "Blue denotes classes that contain at least one custom view; green shows those that have an example.",
];

export default function App() {
  return (
    <>
      <Global />
      <Page>
        <Win>
          <TitleBar>
            <Lights>
              <Light $c="#f46b60" />
              <Light $c="#fcc044" />
              <Light $c="#5fcb52" />
            </Lights>
            Glamorous Toolkit
          </TitleBar>
          <TabBar>
            <LogoTab>
              <LogoG>g</LogoG>
              <LogoT>t</LogoT>
            </LogoTab>
            <Tab>
              Tour
              <CloseIcon />
            </Tab>
            <ToolIcons>
              <SearchIcon />
              <BarsIcon />
            </ToolIcons>
          </TabBar>
          <Content>
            <Intro>
              {intro.map((t) => (
                <div key={t}>{t}</div>
              ))}
            </Intro>
            <MapFrame>
              <Node n={treemap} w={1} />
            </MapFrame>
            <Arrow />
            <Popover>
              <CardGrid>
                <SplitCard>
                  <TextCol>
                    <Para>{"You can view a class through\nmethods in many ways\nand get views like these.\nYou can interact with a method\ndirectly in the code of the\nrunning environment."}</Para>
                    <Para>{"As we can have many ways\nto represent objects in every\nobject we have a variety, like\nmethods that can be\ngtView and more.\nThey are selected by pragma\nsimply "}<Mark>gtView</Mark>{" and define\nyour own views."}</Para>
                    <Para>{"For instance the "}<Mark>gtJson</Mark>{"\nThis view can be also\nyour own class with columns."}</Para>
                    <Para>{"The view can list the source\nof a method defined directly\nby "}<Mark>forPragma:</Mark>{" In this\nwe look at classes. The\nsearch "}<Mark>gtViewsFor:</Mark>{" and\nclasses like "}<Mark>GtPhlowView</Mark>{"\nmethods of the "}<Mark>gtSpotter</Mark>{"\nnew views below."}</Para>
                  </TextCol>
                  <CodeBox>{`"GtInspectorExamples >> gtViewsFor:"
gtClassesFor: aView
  <gtView>
  ^ aView columnedList
    title: 'Classes';
    priority: 10;
    items: [ self classes ];
    column: 'Name'
      format: [ :aClass | aClass name ];
  ;
    column: 'Methods'
      item: [ :each | each methods size ];
  actionStencil: [ ]`}</CodeBox>
                </SplitCard>
                <BigWord>moldable coding</BigWord>
                <Card>
                  <Pane>
                    <PaneTitle>GtClassCoder</PaneTitle>
                    <div>Brick-Glamorous</div>
                    <div>Inherits from: BrStencil</div>
                    <div>Methods   Definition   Comment</div>
                    {methods.map((m) => (
                      <MethodRow key={m}>
                        {"GtClassCoder >> \n" + m}
                        <span>accessing</span>
                      </MethodRow>
                    ))}
                  </Pane>
                </Card>
                <BigWord>querying</BigWord>
                <Card>
                  <CardTitle>Inspect a search, a live query object and its results.</CardTitle>
                  <TallPane>
                    Pages
                    <InnerBox>gtViewsFor: aView gtView</InnerBox>
                  </TallPane>
                </Card>
                <Card>
                  <CardTitle>Every query is live and can be composed and refined with a pipeline.</CardTitle>
                  <TallPane>
                    Pages
                    <InnerBox>gtViewsFor: aView gtView</InnerBox>
                  </TallPane>
                </Card>
                <BigWord>moldable search</BigWord>
                <Card>
                  <CardTitle>Search everywhere with Spotter, and dive in.</CardTitle>
                  <TableBox>
                    <TableHead>Spotter</TableHead>
                    <TableGap />
                  </TableBox>
                </Card>
                <Card>
                  <CardTitle>Search in place.</CardTitle>
                  <TableBox>
                    <TableHead>Spotter</TableHead>
                    <TableGap />
                  </TableBox>
                </Card>
                <BigWord>live documents</BigWord>
                <Card>
                  <Pane>
                    <Para>Glamorous Toolkit</Para>
                    <Para>{"Glamorous Toolkit is the moldable development\nenvironment. It is a live notebook, a flexible\ncode editor, a visualization engine and a data\nplatform. It makes the inside of software systems\nexplorable from many perspectives, and you\ncan mold it."}</Para>
                    <Para>{"Glamorous Toolkit comes with many views\nprovided out of the box, and a set of tools for\ndevelopers to write their own, so that what you\nsee of a system is what matters to you. These\nviews change as the system grows."}</Para>
                    <Para>{"Glamorous Toolkit is moldable through and\nthrough, every object can have views of its own,\nand the languages can be extended with parsers\nfor anything you need. Read on for details\nand follow the tutorials in the book.\nHappy exploration!"}</Para>
                    <Para>How to get started</Para>
                    <Para>{"Glamorous Toolkit runs on macOS,\nLinux and Windows. Download the distribution\nand launch it, the image holds everything you\nneed. You can also build it from the sources\nusing the examples included with it."}</Para>
                  </Pane>
                </Card>
                <Note>
                  <div>Glamorous Toolkit is an open system. We invite others to be involved in</div>
                  <div>Pharo, the moldable reality of software that lets you play.</div>
                </Note>
                <Card>
                  <CardTitle>
                    The first view of a class gives you an overview of what it does and how it is used.
                    <br />
                    Every object can have custom views, and they are the way you read what you see.
                  </CardTitle>
                  <Pane $x={28} $w={113} $h={146} $top={4}>
                    <PaneTitle>JSONParser</PaneTitle>
                    <div>Superclass: SmaCCGLRParser</div>
                    <div>Coder   Comment   Source   Tests   Meta</div>
                    <ListGap />
                    <div>Browse   Methods</div>
                    {parserRows.map((m) => (
                      <MethodRow key={m} $slim>{m}</MethodRow>
                    ))}
                  </Pane>
                </Card>
                <Card>
                  <CardTitle>
                    The need for moldability is pervasive.
                    <br />
                    The visualization below shows a treemap of the classes and packages.
                    <br />
                    Blue denotes classes that contain at least one custom view; green those with an example.
                  </CardTitle>
                  <MiniWrap>
                    <MiniFrame>
                      <Node n={miniTree} w={1} />
                    </MiniFrame>
                  </MiniWrap>
                </Card>
              </CardGrid>
              <FootBar>
                <IconBtn>
                  <PenIcon />
                </IconBtn>
                <IconBtn>
                  <InspectIcon />
                </IconBtn>
              </FootBar>
              <MenuTab>
                <BarsIcon />
              </MenuTab>
            </Popover>
          </Content>
        </Win>
      </Page>
    </>
  );
}
